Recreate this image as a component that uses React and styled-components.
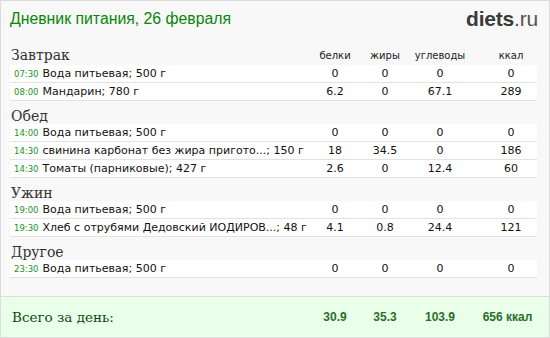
import React from "react";
import styled, { createGlobalStyle } from "styled-components";

const Global = createGlobalStyle`
  html, body { margin: 0; padding: 0; background: #f8f8f8; }
  * { box-sizing: border-box; }
`;

const Page = styled.div`
  width: 550px;
  height: 338px;
  background: #f8f8f8;
  border: 1px solid #dcdcdc;
  display: flex;
  flex-direction: column;
  overflow: hidden;
`;

const Header = styled.div`
  display: flex;
  justify-content: space-between;
  align-items: center;
  height: 36px;
  padding: 0 11px 0 9px;
`;

const Title = styled.div`
  font-family: "Liberation Sans", Arial, sans-serif;
  font-size: 15.8px;
  color: #0a850a;
`;

const Logo = styled.div`
  font-family: "Liberation Sans", Arial, sans-serif;
  font-size: 21px;
  color: #3a3a3a;
  letter-spacing: -0.2px;
  b { font-weight: bold; }
  span { color: #555; }
`;

const Body = styled.div`
  padding: 0 12px 0 9px;
  flex: 1;
`;

const Grid = styled.div`
  display: grid;
  grid-template-columns: 1fr 50px 50px 60px 67px;
  align-items: center;
`;

const SectionHead = styled(Grid)`
  height: ${(p) => p.$h || 23}px;
  padding-top: ${(p) => p.$pt || 6}px;
`;

const SectionName = styled.div`
  font-family: "DejaVu Serif", Georgia, serif;
  font-size: 14px;
  color: #333;
  padding-left: 1px;
`;

const ColLabel = styled.div`
  font-family: "DejaVu Sans", Tahoma, sans-serif;
  font-size: 10px;
  color: #222;
  text-align: center;
  padding-left: ${(p) => (p.$last ? 15 : 0)}px;
`;

const Row = styled(Grid)`
  height: 18px;
  background: #fff;
  border-bottom: 1px solid #e2e2e2;
`;

const Name = styled.div`
  display: flex;
  align-items: baseline;
  white-space: nowrap;
  font-family: "DejaVu Sans", Verdana, sans-serif;
  font-size: 11px;
  color: #111;
  padding-left: 4px;
  min-width: 0;
`;

const Time = styled.span`
  font-family: "DejaVu Sans", Tahoma, sans-serif;
  font-size: 8.5px;
  color: #1c921c;
  margin-right: 4px;
`;

const Val = styled.div`
  font-family: "DejaVu Sans", Verdana, sans-serif;
  font-size: 11px;
  color: #111;
  text-align: center;
  padding-left: ${(p) => (p.$last ? 15 : 0)}px;
`;

const Footer = styled(Grid)`
  height: 41px;
  margin-top: auto;
  background: #eaffea;
  border-top: 1px solid #dcdcdc;
  padding: 0 12px 0 9px;
`;

const TotalLabel = styled.div`
  font-family: "DejaVu Serif", Georgia, serif;
  font-size: 13.5px;
  color: #0d4d0d;
  padding-left: 2px;
`;

const TotalVal = styled.div`
  font-family: "Liberation Sans", Arial, sans-serif;
  font-weight: bold;
  font-size: 12px;
  color: #2a6e2a;
  text-align: center;
  padding-left: ${(p) => (p.$last ? 8 : 0)}px;
`;

const sections = [
  {
    name: "Завтрак",
    rows: [
      ["07:30", "Вода питьевая; 500 г", "0", "0", "0", "0"],
      ["08:00", "Мандарин; 780 г", "6.2", "0", "67.1", "289"],
    ],
  },
  {
    name: "Обед",
    rows: [
      ["14:00", "Вода питьевая; 500 г", "0", "0", "0", "0"],
      ["14:30", "свинина карбонат без жира пригото...; 150 г", "18", "34.5", "0", "186"],
      ["14:30", "Томаты (парниковые); 427 г", "2.6", "0", "12.4", "60"],
    ],
  },
  {
    name: "Ужин",
    rows: [
      ["19:00", "Вода питьевая; 500 г", "0", "0", "0", "0"],
      ["19:30", "Хлеб с отрубями Дедовский ИОДИРОВ...; 48 г", "4.1", "0.8", "24.4", "121"],
    ],
  },
  {
    name: "Другое",
    rows: [["23:30", "Вода питьевая; 500 г", "0", "0", "0", "0"]],
  },
];

export default function App() {
  return (
    <>
      <Global />
      <Page>
        <Header>
          <Title>Дневник питания, 26 февраля</Title>
          <Logo>
            <b>diets</b>
            <span>.ru</span>
          </Logo>
        </Header>
        <Body>
          {sections.map((s, i) => (
            <React.Fragment key={s.name}>
              <SectionHead $h={i === 0 ? 28 : 23} $pt={i === 0 ? 8 : 6}>
                <SectionName>{s.name}</SectionName>
                {i === 0 && (
                  <>
                    <ColLabel>белки</ColLabel>
                    <ColLabel>жиры</ColLabel>
                    <ColLabel>углеводы</ColLabel>
                    <ColLabel $last>ккал</ColLabel>
                  </>
                )}
              </SectionHead>
              {s.rows.map((r, j) => (
                <Row key={j}>
                  <Name>
                    <Time>{r[0]}</Time>
                    {r[1]}
                  </Name>
                  <Val>{r[2]}</Val>
                  <Val>{r[3]}</Val>
                  <Val>{r[4]}</Val>
                  <Val $last>{r[5]}</Val>
                </Row>
              ))}
            </React.Fragment>
          ))}
        </Body>
        <Footer>
          <TotalLabel>Всего за день:</TotalLabel>
          <TotalVal>30.9</TotalVal>
          <TotalVal>35.3</TotalVal>
          <TotalVal>103.9</TotalVal>
          <TotalVal $last>656 ккал</TotalVal>
        </Footer>
      </Page>
    </>
  );
}
